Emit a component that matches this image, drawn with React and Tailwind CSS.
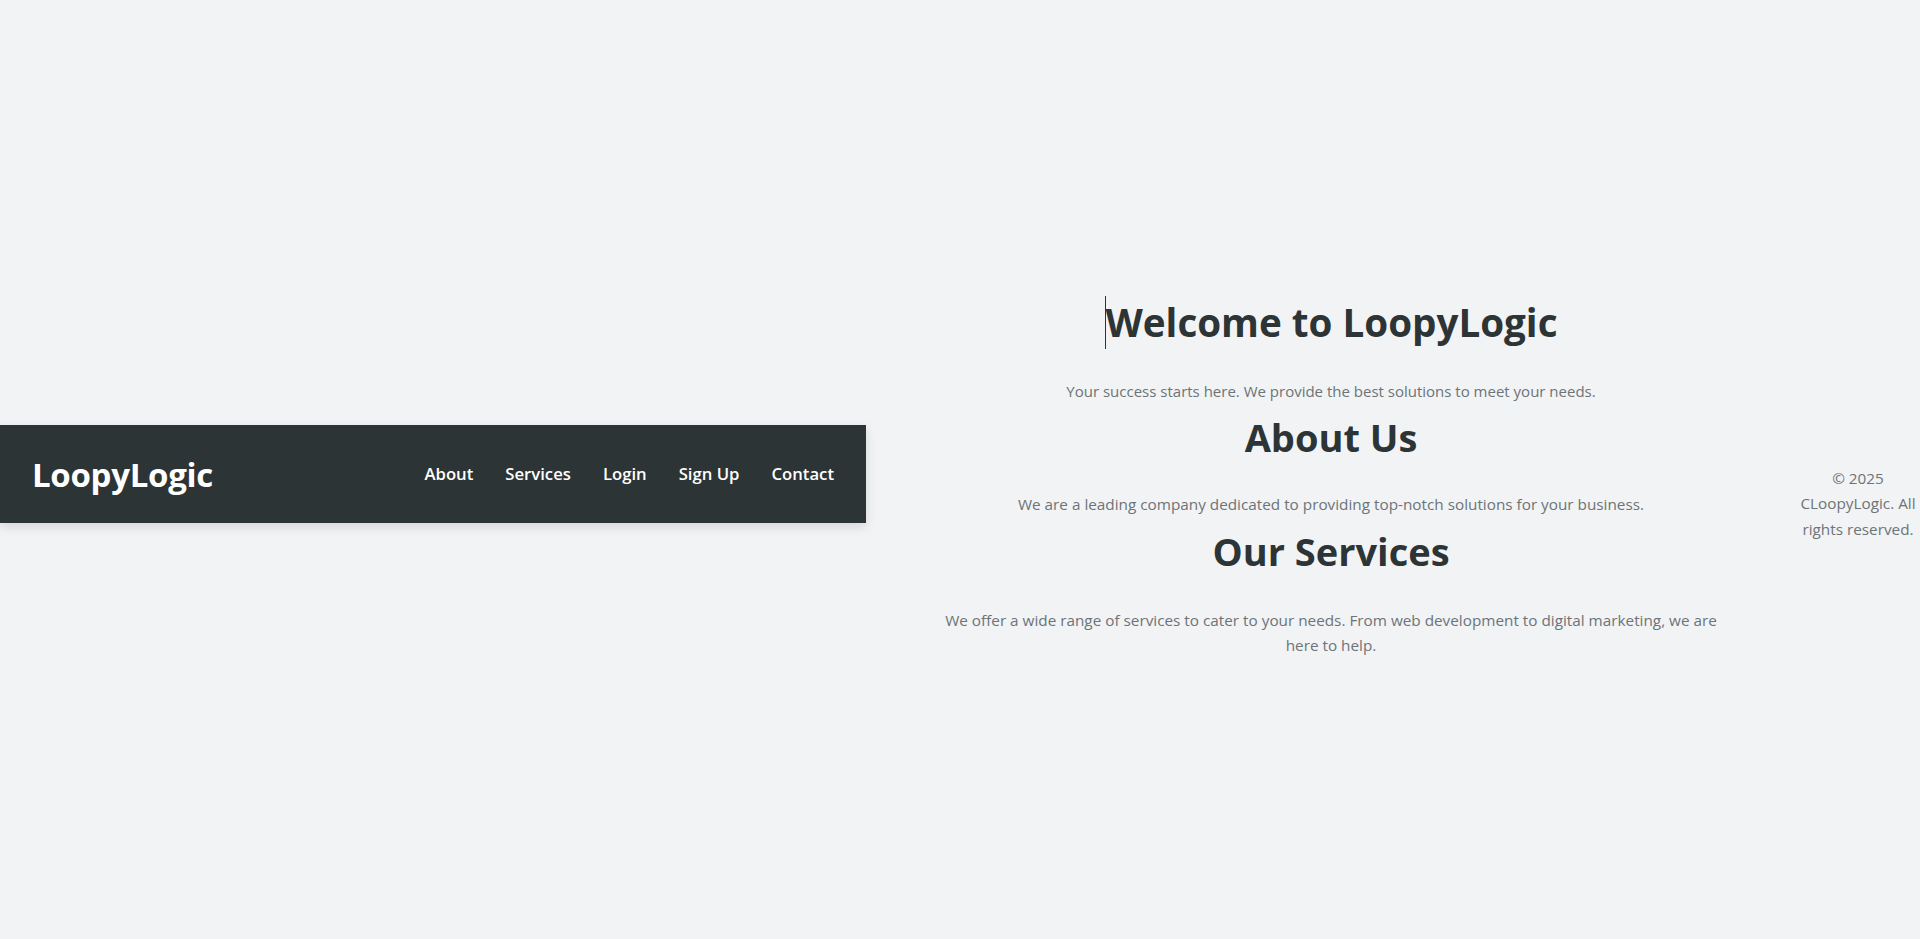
export default function App() {
  const links = ['About', 'Services', 'Login', 'Sign Up', 'Contact']

  return (
    <div className="min-h-screen bg-[#f2f3f5] pt-2 flex items-center font-['Open_Sans',sans-serif]">
      {/* Navbar */}
      <nav className="w-[866px] shrink-0 h-[98px] bg-[#2d3436] px-8 flex items-center justify-between shadow-[0_4px_10px_rgba(0,0,0,0.12)]">
        <div className="text-white font-bold text-[33px] leading-none tracking-[-0.3px] pt-[2px]">LoopyLogic</div>
        <ul className="flex items-center gap-8">
          {links.map((l) => (
            <li key={l}>
              <a href="#" className="text-white font-semibold text-[16.7px] leading-none">{l}</a>
            </li>
          ))}
        </ul>
      </nav>

      {/* Main */}
      <main className="flex-1 px-[74px] mt-[8px] text-center">
        <h1 className="inline-block border-l border-[#2d3436] text-[#2d3436] font-bold text-[38.6px] leading-[53px] mb-[30px]">
          Welcome to LoopyLogic
        </h1>
        <p className="text-[#6c7478] text-[15px] leading-[25.6px] mb-[6px]">
          Your success starts here. We provide the best solutions to meet your needs.
        </p>
        <h2 className="text-[#2d3436] font-bold text-[38px] leading-[53px] mb-[28px]">About Us</h2>
        <p className="text-[#6c7478] text-[15.3px] leading-[25.6px] mb-[7px]">
          We are a leading company dedicated to providing top-notch solutions for your business.
        </p>
        <h2 className="text-[#2d3436] font-bold text-[38px] leading-[53px] mb-[30px]">Our Services</h2>
        <p className="text-[#6c7478] text-[15.3px] leading-[25.6px]">
          We offer a wide range of services to cater to your needs. From web development to digital marketing, we are here to help.
        </p>
      </main>

      {/* Footer */}
      <footer className="w-[124px] shrink-0 mt-[61px] text-center text-[#6c7478] text-[15.3px] leading-[25.6px]">
        © 2025 CLoopyLogic. All rights reserved.
      </footer>
    </div>
  )
}
